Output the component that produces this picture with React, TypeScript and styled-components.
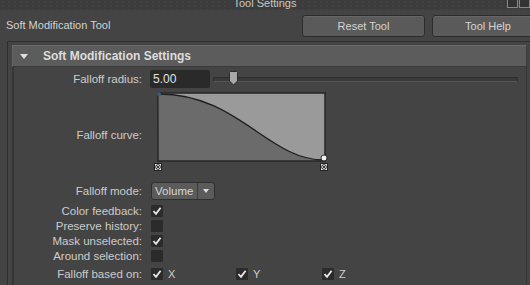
import styled, { createGlobalStyle } from 'styled-components';

const GlobalStyle = createGlobalStyle`
  html, body {
    margin: 0;
    padding: 0;
    background: #444444;
    overflow: hidden;
  }
  body {
    font-family: "Liberation Sans", Arial, sans-serif;
    font-size: 11px;
    color: #cfcfcf;
  }
`;

const Window = styled.div`
  width: 530px;
  height: 285px;
  background: #444444;
  display: flex;
  flex-direction: column;
  overflow: hidden;
`;

const TitleBar = styled.div`
  height: 10px;
  display: flex;
  align-items: flex-end;
  justify-content: center;
  position: relative;
  background-color: #3c3c3c;
  background-image: radial-gradient(#4a4a4a 0.8px, transparent 1px);
  background-size: 6px 4px;
  overflow: hidden;
`;

const TitleText = styled.span`
  font-size: 11px;
  line-height: 11px;
  color: #c8c8c8;
  background: #3c3c3c;
  padding: 0 6px;
  margin-bottom: 1px;
`;

const WinButtons = styled.div`
  position: absolute;
  right: 0;
  top: -3px;
  display: flex;
  gap: 1px;
`;

const WinButton = styled.div`
  width: 11px;
  height: 11px;
  border: 1px solid #888;
  box-sizing: border-box;
  background: #333;
`;

const ToolHeader = styled.div`
  height: 31px;
  display: flex;
  align-items: center;
  padding-left: 6px;
`;

const ToolTitle = styled.div`
  flex: 0 0 289px;
  font-size: 11px;
  color: #d2d2d2;
  margin-top: -2px;
`;

const ToolButton = styled.button<{ $w: number }>`
  width: ${(p) => p.$w}px;
  height: 22px;
  margin-left: 7px;
  margin-top: 1px;
  background: #5a5a5a;
  border: 1px solid #2c2c2c;
  border-radius: 3px;
  box-shadow: inset 0 1px 0 #666;
  color: #d4d4d4;
  font-family: "Liberation Sans", Arial, sans-serif;
  font-size: 11px;
  padding: 0;
  flex-shrink: 0;
`;

const Panel = styled.div`
  flex: 1;
  margin-left: 7px;
  border-left: 1px solid #2f2f2f;
  border-top: 1px solid #2f2f2f;
  padding: 3px 3px 0 4px;
  display: flex;
  flex-direction: column;
`;

const SectionHeader = styled.div`
  height: 20px;
  background: #5c5c5c;
  border: 1px solid #3a3a3a;
  border-top-color: #6a6a6a;
  border-left-color: #666;
  display: flex;
  align-items: center;
  font-weight: bold;
  font-size: 12px;
  color: #dcdcdc;
`;

const Caret = styled.span`
  width: 0;
  height: 0;
  border-left: 4px solid transparent;
  border-right: 4px solid transparent;
  border-top: 5px solid #e0e0e0;
  margin: 0 15px 0 7px;
`;

const Content = styled.div`
  flex: 1;
  border-left: 2px solid #363636;
  border-right: 1px solid #363636;
  padding-top: 2px;
  display: flex;
  flex-direction: column;
`;

const Row = styled.div<{ $h: number }>`
  display: grid;
  grid-template-columns: 128px 1fr;
  column-gap: 8px;
  height: ${(p) => p.$h}px;
  flex-shrink: 0;
  align-items: center;
`;

const Label = styled.div<{ $offset?: number }>`
  text-align: right;
  white-space: nowrap;
  color: #cccccc;
  font-size: 11.5px;
  margin-top: ${(p) => p.$offset ?? 0}px;
`;

const Controls = styled.div`
  display: flex;
  align-items: center;
  height: 100%;
`;

const NumberField = styled.div`
  width: 60px;
  height: 18px;
  background: #2a2a2a;
  border-radius: 2px;
  box-sizing: border-box;
  padding-left: 3px;
  display: flex;
  align-items: center;
  font-size: 12px;
  color: #e2e2e2;
`;

const SliderTrack = styled.div`
  position: relative;
  margin-left: 3px;
  width: 303px;
  height: 3px;
  border: 1px solid #2e2e2e;
  border-bottom-color: #555;
  background: #3a3a3a;
`;

const SliderThumb = styled.svg`
  position: absolute;
  left: 15px;
  top: -7px;
`;

const CurveWrap = styled.div`
  position: relative;
  width: 180px;
  height: 100%;
  margin-left: 4px;
  margin-top: 3px;
`;

const Checkbox = styled.div`
  width: 12px;
  height: 12px;
  background: #2b2b2b;
  border-radius: 1px;
  display: flex;
  align-items: center;
  justify-content: center;
  flex-shrink: 0;
`;

const AxisItem = styled.div<{ $w: number }>`
  width: ${(p) => p.$w}px;
  display: flex;
  align-items: center;
  gap: 5px;
  margin-left: 1px;
`;

const Dropdown = styled.div`
  width: 64px;
  height: 18px;
  margin-left: 1px;
  margin-top: 1px;
  display: flex;
  border: 1px solid #2f2f2f;
  border-radius: 3px;
  background: #5b5b5b;
  box-sizing: border-box;
  overflow: hidden;
`;

const DropText = styled.div`
  flex: 1;
  padding-left: 3px;
  display: flex;
  align-items: center;
  font-size: 11.5px;
  color: #d6d6d6;
`;

const DropArrow = styled.div`
  width: 16px;
  border-left: 1px solid #3c3c3c;
  display: flex;
  align-items: center;
  justify-content: center;
  &::after {
    content: '';
    border-left: 3.5px solid transparent;
    border-right: 3.5px solid transparent;
    border-top: 4px solid #dcdcdc;
  }
`;

function Check({ on }: { on?: boolean }) {
  return (
    <Checkbox>
      {on && (
        <svg width="10" height="10" viewBox="0 0 10 10">
          <path d="M1.5 5.2 L4 7.8 L8.6 1.8" fill="none" stroke="#e8e8e8" strokeWidth="1.8" />
        </svg>
      )}
    </Checkbox>
  );
}

function Marker({ x, y }: { x: number; y: number }) {
  return (
    <g transform={`translate(${x} ${y})`}>
      <rect x="0.5" y="0.5" width="7" height="7" fill="#f0f0f0" stroke="#222" />
      <circle cx="4" cy="4" r="2.4" fill="none" stroke="#222" strokeWidth="0.9" />
      <path d="M2.3 2.3 L5.7 5.7 M5.7 2.3 L2.3 5.7" stroke="#222" strokeWidth="0.9" />
    </g>
  );
}

function FalloffCurve() {
  const curve = 'M1 1 C 80 1, 110 67, 166 67';
  return (
    <svg width="180" height="82" viewBox="-4 -1 180 82" style={{ position: 'absolute', left: 0, top: 0 }}>
      <rect x="0" y="0" width="167" height="68" fill="#9a9a9a" />
      <path d={`${curve} L 166 68 L 0 68 Z`} fill="#6b6b6b" />
      <path d={curve} fill="none" stroke="#1e1e1e" strokeWidth="1.3" />
      <rect x="0" y="0" width="167" height="68" fill="none" stroke="#262626" strokeWidth="1.5" />
      <circle cx="1" cy="1" r="2" fill="#3e5a78" />
      <Marker x={-4} y={70} />
      <circle cx="166" cy="65" r="3" fill="#f0f0f0" stroke="#222" strokeWidth="0.9" />
      <Marker x={162} y={70} />
    </svg>
  );
}

export default function App() {
  return (
    <Window>
      <GlobalStyle />
      <TitleBar>
        <TitleText>Tool Settings</TitleText>
        <WinButtons>
          <WinButton />
          <WinButton />
        </WinButtons>
      </TitleBar>
      <ToolHeader>
        <ToolTitle>Soft Modification Tool</ToolTitle>
        <ToolButton $w={123}>Reset Tool</ToolButton>
        <ToolButton $w={112}>Tool Help</ToolButton>
      </ToolHeader>
      <Panel>
        <SectionHeader>
          <Caret />
          Soft Modification Settings
        </SectionHeader>
        <Content>
          <Row $h={20}>
            <Label>Falloff radius:</Label>
            <Controls>
              <NumberField>5.00</NumberField>
              <SliderTrack>
                <SliderThumb width="9" height="15" viewBox="0 0 9 15">
                  <path d="M0.5 1.5 Q0.5 0.5 1.5 0.5 L7.5 0.5 Q8.5 0.5 8.5 1.5 L8.5 10 L4.5 14 L0.5 10 Z" fill="#a8a8a8" stroke="#2a2a2a" />
                </SliderThumb>
              </SliderTrack>
            </Controls>
          </Row>
          <Row $h={89} style={{ alignItems: 'start' }}>
            <Label $offset={40}>Falloff curve:</Label>
            <CurveWrap>
              <FalloffCurve />
            </CurveWrap>
          </Row>
          <Row $h={25}>
            <Label>Falloff mode:</Label>
            <Controls>
              <Dropdown>
                <DropText>Volume</DropText>
                <DropArrow />
              </Dropdown>
            </Controls>
          </Row>
          <Row $h={15}>
            <Label>Color feedback:</Label>
            <Controls>
              <AxisItem $w={20}><Check on /></AxisItem>
            </Controls>
          </Row>
          <Row $h={15}>
            <Label>Preserve history:</Label>
            <Controls>
              <AxisItem $w={20}><Check /></AxisItem>
            </Controls>
          </Row>
          <Row $h={15}>
            <Label>Mask unselected:</Label>
            <Controls>
              <AxisItem $w={20}><Check on /></AxisItem>
            </Controls>
          </Row>
          <Row $h={15}>
            <Label>Around selection:</Label>
            <Controls>
              <AxisItem $w={20}><Check /></AxisItem>
            </Controls>
          </Row>
          <Row $h={21}>
            <Label>Falloff based on:</Label>
            <Controls>
              <AxisItem $w={84}><Check on />X</AxisItem>
              <AxisItem $w={85}><Check on />Y</AxisItem>
              <AxisItem $w={40}><Check on />Z</AxisItem>
            </Controls>
          </Row>
        </Content>
      </Panel>
    </Window>
  );
}
